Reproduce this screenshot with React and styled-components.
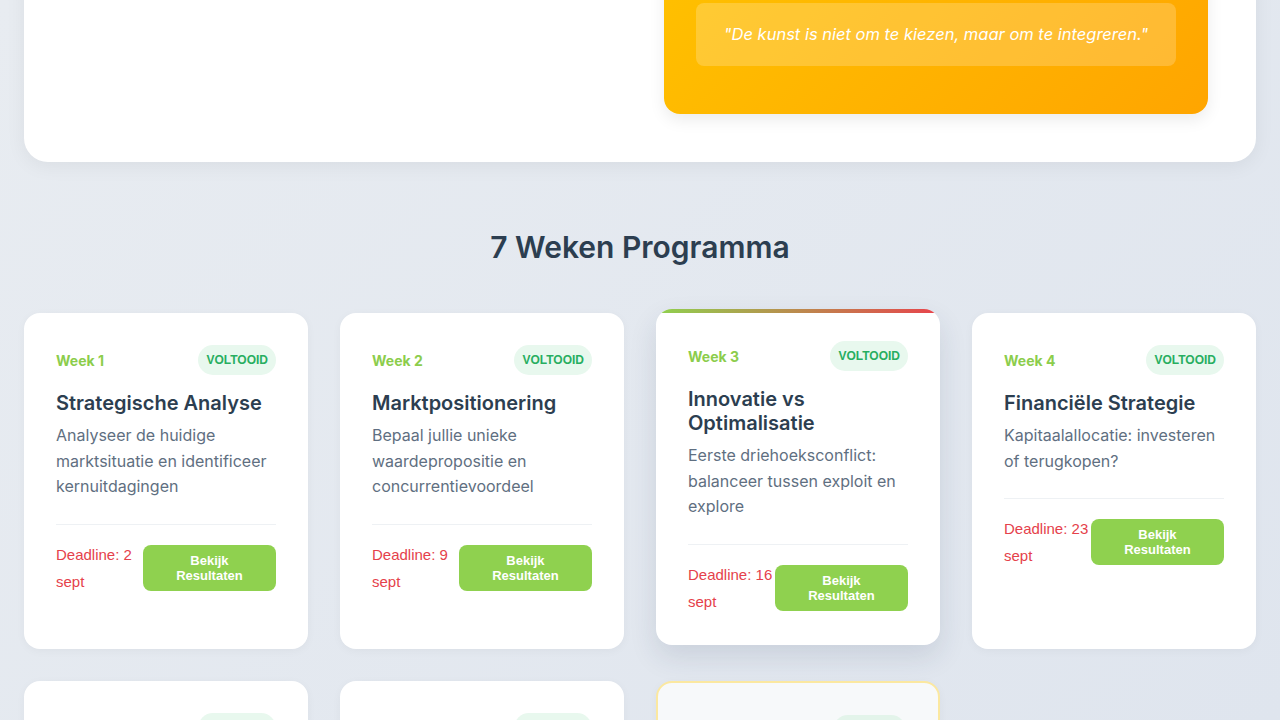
import styled, { createGlobalStyle, css } from "styled-components";

const GlobalStyle = createGlobalStyle`
    html {
        background: linear-gradient(135deg, #e8ecf1 0%, #dfe5ee 100%) fixed;
        min-height: 100%;
    }
    body {
        margin: 0;
        font-family: Inter, "Noto Sans", sans-serif;
        color: #2c3e50;
    }
    * {
        box-sizing: border-box;
    }
`

const Page = styled.div`
    margin-top: -167px;
    padding: 0 24px 48px;
`

const Hero = styled.section`
    background: #fff;
    border-radius: 24px;
    padding: 48px;
    box-shadow: 0 4px 20px rgba(0, 0, 0, 0.06);
    display: grid;
    grid-template-columns: minmax(0, 1fr) minmax(0, 1fr);
    gap: 48px;
    align-items: start;
`

const Intro = styled.div`
    h1 {
        margin: 0 0 16px;
        font-size: 36px;
        line-height: 44px;
        font-weight: 700;
    }
    p {
        margin: 0;
        font-size: 16px;
        line-height: 26px;
        color: #5f6f81;
    }
`

const Highlight = styled.div`
    background: linear-gradient(135deg, #ffc400 0%, #ffa500 100%);
    border-radius: 16px;
    padding: 32px 32px 48px;
    color: #fff;
    box-shadow: 0 6px 16px rgba(0, 0, 0, 0.08);

    h3 {
        margin: 0 0 12px;
        font-size: 22px;
        line-height: 28px;
        font-weight: 700;
    }
    p {
        margin: 0 0 24px;
        font-size: 16px;
        line-height: 26px;
    }
`

const Quote = styled.blockquote`
    margin: 0;
    padding: 20px;
    border-radius: 8px;
    background: rgba(255, 255, 255, 0.2);
    font-size: 16.5px;
    line-height: 23px;
    font-weight: 400;
    font-style: italic;
    text-align: center;
`

const SectionTitle = styled.h2`
    margin: 66px 0 47px;
    text-align: center;
    font-size: 30px;
    line-height: 38px;
    font-weight: 600;
    color: #2c3e50;
`

const Grid = styled.div`
    display: grid;
    grid-template-columns: repeat(4, minmax(0, 1fr));
    gap: 32px;
`

const Card = styled.div`
    position: relative;
    overflow: hidden;
    background: ${p => p.$locked ? "#f7f9fa" : "#fff"};
    border: ${p => p.$locked ? "2px solid #fbe8a0" : "none"};
    border-radius: 16px;
    padding: 32px 32px 30px;
    box-shadow: 0 2px 10px rgba(0, 0, 0, 0.04);

    ${p => p.$active && css`
        transform: translateY(-4px);
        box-shadow: 0 12px 28px rgba(30, 50, 80, 0.12);
        &::before {
            content: "";
            position: absolute;
            top: 0;
            left: 0;
            right: 0;
            height: 4px;
            background: linear-gradient(90deg, #8fd14f, #e8434c);
        }
    `}
`

const CardHead = styled.div`
    display: flex;
    justify-content: space-between;
    align-items: center;
    margin-bottom: 16px;
`

const WeekLabel = styled.span`
    font-size: 14px;
    font-weight: 700;
    color: #8ccd4c;
`

const Badge = styled.span`
    font-family: "Liberation Sans", Arial, sans-serif;
    font-size: 12px;
    line-height: 14px;
    font-weight: 700;
    padding: 8px;
    border-radius: 20px;
    background: ${p => p.$current ? "#e3f4ea" : "#e8f8ee"};
    color: #27ae60;
`

const CardTitle = styled.h3`
    margin: 0 0 8px;
    font-size: 20px;
    line-height: 24px;
    font-weight: 600;
    color: #2c3e50;
`

const CardText = styled.p`
    margin: 0;
    font-size: 16px;
    line-height: 25.6px;
    color: #5f6f81;
`

const CardFooter = styled.div`
    margin-top: 24px;
    padding-top: 16px;
    border-top: 1px solid #eef1f4;
    display: flex;
    justify-content: space-between;
    align-items: center;
`

const Deadline = styled.span`
    flex: 1;
    font-family: "Liberation Sans", Arial, sans-serif;
    font-size: 15px;
    line-height: 27px;
    color: #e5414b;
`

const ResultButton = styled.button`
    flex: 0 0 60.5%;
    border: none;
    border-radius: 8px;
    padding: 8px 16px;
    background: #8fd14f;
    color: #fff;
    font-family: "Liberation Sans", Arial, sans-serif;
    font-size: 13px;
    line-height: 15px;
    font-weight: 700;
    cursor: pointer;
`

const weeks = [
    { nr: 1, title: "Strategische Analyse", text: "Analyseer de huidige marktsituatie en identificeer kernuitdagingen", deadline: "2 sept", status: "VOLTOOID" },
    { nr: 2, title: "Marktpositionering", text: "Bepaal jullie unieke waardepropositie en concurrentievoordeel", deadline: "9 sept", status: "VOLTOOID" },
    { nr: 3, title: "Innovatie vs Optimalisatie", text: "Eerste driehoeksconflict: balanceer tussen exploit en explore", deadline: "16 sept", status: "VOLTOOID", active: true },
    { nr: 4, title: "Financiële Strategie", text: "Kapitaalallocatie: investeren of terugkopen?", deadline: "23 sept", status: "VOLTOOID" },
    { nr: 5, title: "Organisatie & Cultuur", text: "Richt de organisatie in voor de gekozen strategie", deadline: "30 sept", status: "VOLTOOID" },
    { nr: 6, title: "Stakeholder Management", text: "Breng belangen van aandeelhouders en medewerkers in balans", deadline: "7 okt", status: "VOLTOOID" },
    { nr: 7, title: "Integratie", text: "Breng alle keuzes samen in één coherente strategie", deadline: "14 okt", status: "ACTUEEL", locked: true },
]

export default function App() {
    return (
        <>
            <GlobalStyle />
            <Page>
                <Hero>
                    <Intro>
                        <h1>Strategie Simulatie</h1>
                        <p>Zeven weken lang nemen jullie als directieteam de belangrijkste beslissingen voor jullie onderneming.</p>
                    </Intro>
                    <Highlight>
                        <h3>Het Driehoeksdilemma</h3>
                        <p>Groei, winst en risico in balans.</p>
                        <Quote>"De kunst is niet om te kiezen, maar om te integreren."</Quote>
                    </Highlight>
                </Hero>

                <SectionTitle>7 Weken Programma</SectionTitle>

                <Grid>
                    {weeks.map(w => (
                        <Card key={w.nr} $active={w.active} $locked={w.locked}>
                            <CardHead>
                                <WeekLabel>Week {w.nr}</WeekLabel>
                                <Badge $current={w.locked}>{w.status}</Badge>
                            </CardHead>
                            <CardTitle>{w.title}</CardTitle>
                            <CardText>{w.text}</CardText>
                            <CardFooter>
                                <Deadline>Deadline: {w.deadline}</Deadline>
                                <ResultButton>Bekijk Resultaten</ResultButton>
                            </CardFooter>
                        </Card>
                    ))}
                </Grid>
            </Page>
        </>
    )
}
